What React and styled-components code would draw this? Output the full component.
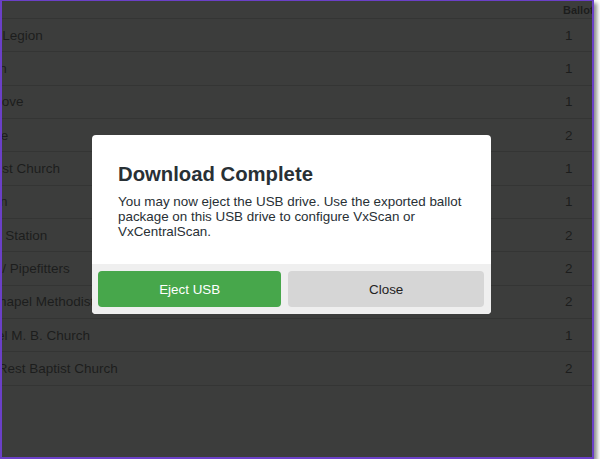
import React from "react";
import styled, { createGlobalStyle } from "styled-components";

const Global = createGlobalStyle`
  html, body { margin: 0; padding: 0; background: #ffffff; }
  body { font-family: "Liberation Sans", Arial, sans-serif; }
  * { box-sizing: border-box; }
`;

const Frame = styled.div`
  position: relative;
  width: 594px;
  height: 459px;
  border: 2px solid #6b40c8;
  border-top-width: 1px;
  background: #3c3d3c;
  box-shadow: 3px 3px 4px rgba(0, 0, 0, 0.45);
  overflow: hidden;
`;

const Table = styled.div`
  display: flex;
  flex-direction: column;
  width: 100%;
  overflow: hidden;
  color: #1c1d1d;
  font-size: 13.5px;
`;

const HeaderRow = styled.div`
  display: grid;
  grid-template-columns: 561px 1fr;
  height: 18px;
  border-bottom: 1px solid #343534;
  align-items: center;
`;

const HeaderCell = styled.div`
  font-size: 11px;
  font-weight: bold;
  white-space: nowrap;
  overflow: hidden;
`;

const Row = styled.div`
  display: grid;
  grid-template-columns: 561px 1fr;
  height: calc(100px / 3);
  border-bottom: 1px solid #343534;
  align-items: center;
`;

const NameCell = styled.div`
  white-space: nowrap;
  overflow: hidden;
  text-indent: -60.5px;
`;

const CountCell = styled.div`
  white-space: nowrap;
  padding-left: 2px;
`;

const Overlay = styled.div`
  position: absolute;
  inset: 0;
  display: flex;
  align-items: center;
  justify-content: center;
  padding: 0 11px 9px 0;
`;

const Modal = styled.div`
  width: 399px;
  height: 179px;
  background: #ffffff;
  border-radius: 4px;
  overflow: hidden;
  display: flex;
  flex-direction: column;
  color: #283035;
`;

const Content = styled.div`
  flex: 1;
  padding: 27px 16px 0 26px;
`;

const Title = styled.h1`
  margin: 0 0 8px;
  font-size: 20.3px;
  line-height: 24px;
  font-weight: bold;
`;

const Body = styled.p`
  margin: 0;
  font-size: 13.4px;
  line-height: 15px;
`;

const Footer = styled.div`
  display: flex;
  gap: 7px;
  height: 50px;
  padding: 7px 7px 7px 6px;
  background: #efefef;
`;

const Button = styled.button`
  flex: ${(p) => p.$grow};
  border: none;
  border-radius: 4px;
  font-family: "Liberation Sans", Arial, sans-serif;
  font-size: 13.4px;
  background: ${(p) => (p.$primary ? "#47a74b" : "#d6d6d6")};
  color: ${(p) => (p.$primary ? "#ffffff" : "#222222")};
  cursor: pointer;
`;

const rows = [
  ["American Legion", 1],
  ["Recreation", 1],
  ["Walnut Grove", 1],
  ["Elks Lodge", 2],
  ["First Baptist Church", 1],
  ["Morristown", 1],
  ["Southside Station", 2],
  ["Plumbers / Pipefitters", 2],
  ["Wesley Chapel Methodist Church", 2],
  ["Mt. Carmel M. B. Church", 1],
  ["Pleasant Rest Baptist Church", 2],
];

export default function App() {
  return (
    <>
      <Global />
      <Frame>
        <Table>
          <HeaderRow>
            <HeaderCell />
            <HeaderCell>Ballot Style</HeaderCell>
          </HeaderRow>
          {rows.map(([name, n]) => (
            <Row key={name}>
              <NameCell>{name}</NameCell>
              <CountCell>{n}</CountCell>
            </Row>
          ))}
        </Table>
        <Overlay>
          <Modal>
            <Content>
              <Title>Download Complete</Title>
              <Body>
                You may now eject the USB drive. Use the exported ballot package
                on this USB drive to configure VxScan or VxCentralScan.
              </Body>
            </Content>
            <Footer>
              <Button $primary $grow={183}>Eject USB</Button>
              <Button $grow={196}>Close</Button>
            </Footer>
          </Modal>
        </Overlay>
      </Frame>
    </>
  );
}
